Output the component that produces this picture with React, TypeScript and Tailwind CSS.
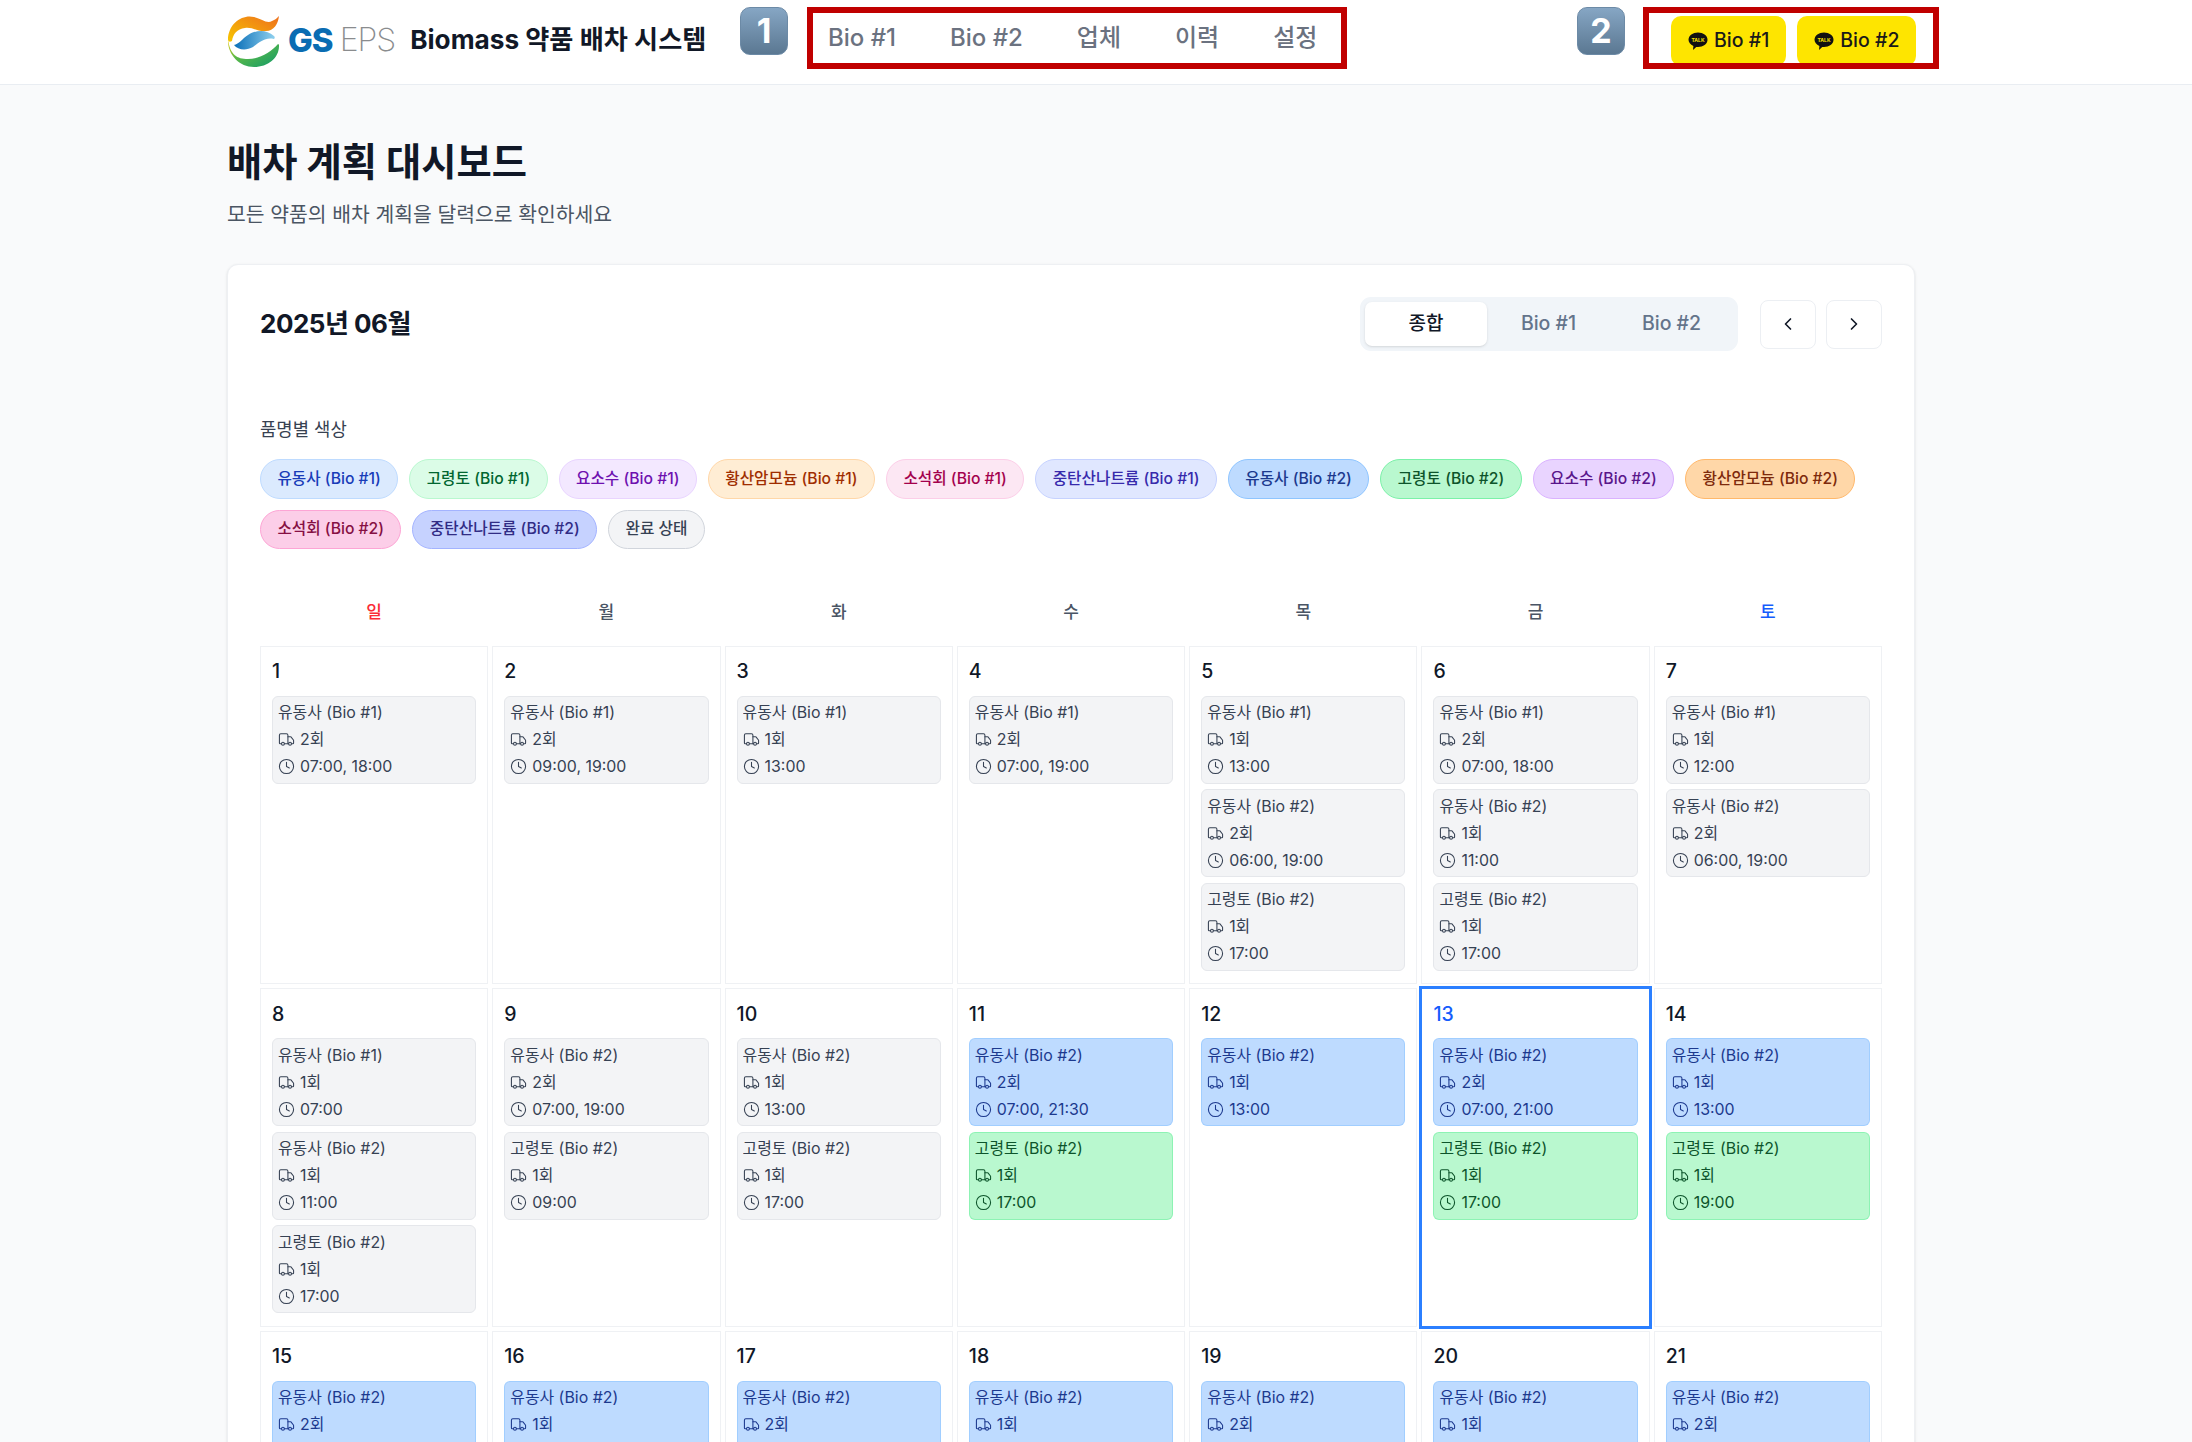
import { ChevronLeft, ChevronRight, Clock, Truck } from 'lucide-react';

type Tone = 'gray' | 'blue' | 'green';
type Batch = { name: string; count: number; times?: string; tone: Tone };

const tones: Record<Tone, string> = {
  gray: 'border-gray-200 bg-gray-100 text-gray-700',
  blue: 'border-blue-300/60 bg-blue-200 text-blue-900',
  green: 'border-green-300/70 bg-green-200 text-green-900',
};

const legend = [
  { label: '유동사 (Bio #1)', cls: 'border-blue-200 bg-blue-100 text-blue-800' },
  { label: '고령토 (Bio #1)', cls: 'border-green-200 bg-green-100 text-green-800' },
  { label: '요소수 (Bio #1)', cls: 'border-purple-200 bg-purple-100 text-purple-800' },
  { label: '황산암모늄 (Bio #1)', cls: 'border-orange-200 bg-orange-100 text-orange-800' },
  { label: '소석회 (Bio #1)', cls: 'border-pink-200 bg-pink-100 text-pink-800' },
  { label: '중탄산나트륨 (Bio #1)', cls: 'border-indigo-200 bg-indigo-100 text-indigo-800' },
  { label: '유동사 (Bio #2)', cls: 'border-blue-300 bg-blue-200 text-blue-900' },
  { label: '고령토 (Bio #2)', cls: 'border-green-300 bg-green-200 text-green-900' },
  { label: '요소수 (Bio #2)', cls: 'border-purple-300 bg-purple-200 text-purple-900' },
  { label: '황산암모늄 (Bio #2)', cls: 'border-orange-300 bg-orange-200 text-orange-900' },
  { label: '소석회 (Bio #2)', cls: 'border-pink-300 bg-pink-200 text-pink-900' },
  { label: '중탄산나트륨 (Bio #2)', cls: 'border-indigo-300 bg-indigo-200 text-indigo-900' },
  { label: '완료 상태', cls: 'border-gray-300 bg-gray-100 text-gray-700' },
];

const U1 = '유동사 (Bio #1)';
const U2 = '유동사 (Bio #2)';
const G2 = '고령토 (Bio #2)';

const b = (name: string, count: number, times: string | undefined, tone: Tone = 'gray'): Batch => ({ name, count, times, tone });

const days: Batch[][] = [
  [b(U1, 2, '07:00, 18:00')],
  [b(U1, 2, '09:00, 19:00')],
  [b(U1, 1, '13:00')],
  [b(U1, 2, '07:00, 19:00')],
  [b(U1, 1, '13:00'), b(U2, 2, '06:00, 19:00'), b(G2, 1, '17:00')],
  [b(U1, 2, '07:00, 18:00'), b(U2, 1, '11:00'), b(G2, 1, '17:00')],
  [b(U1, 1, '12:00'), b(U2, 2, '06:00, 19:00')],
  [b(U1, 1, '07:00'), b(U2, 1, '11:00'), b(G2, 1, '17:00')],
  [b(U2, 2, '07:00, 19:00'), b(G2, 1, '09:00')],
  [b(U2, 1, '13:00'), b(G2, 1, '17:00')],
  [b(U2, 2, '07:00, 21:30', 'blue'), b(G2, 1, '17:00', 'green')],
  [b(U2, 1, '13:00', 'blue')],
  [b(U2, 2, '07:00, 21:00', 'blue'), b(G2, 1, '17:00', 'green')],
  [b(U2, 1, '13:00', 'blue'), b(G2, 1, '19:00', 'green')],
  // the third week runs off the bottom of the page, times not visible
  [b(U2, 2, undefined, 'blue')],
  [b(U2, 1, undefined, 'blue')],
  [b(U2, 2, undefined, 'blue')],
  [b(U2, 1, undefined, 'blue')],
  [b(U2, 2, undefined, 'blue')],
  [b(U2, 1, undefined, 'blue')],
  [b(U2, 2, undefined, 'blue')],
];

const weekdays = ['일', '월', '화', '수', '목', '금', '토'];

function Logo() {
  return (
    <svg width="54" height="56" viewBox="0 0 54 56" className="shrink-0">
      <defs>
        <linearGradient id="top" x1="0" y1="1" x2="1" y2="0">
          <stop offset="0" stopColor="#f7c600" />
          <stop offset="1" stopColor="#ee6f1d" />
        </linearGradient>
        <linearGradient id="bottom" x1="0" y1="0" x2="1" y2="1">
          <stop offset="0" stopColor="#f0d21c" />
          <stop offset="0.4" stopColor="#5cb947" />
          <stop offset="1" stopColor="#0f9a6b" />
        </linearGradient>
        <linearGradient id="mid" x1="0" y1="0" x2="1" y2="0">
          <stop offset="0" stopColor="#0a6fb8" />
          <stop offset="1" stopColor="#8fd0ee" />
        </linearGradient>
      </defs>
      <path d="M1 28C1 11 16 2 27 5c8 2 13 7 18 4 3-1 5-3 7-5-1 8-5 15-13 15-8 1-13-4-21-3C10 17 6 22 5 29c-2 1-3 1-4-1Z" fill="url(#top)" />
      <path d="M1 27c2 16 9 20 20 20 12 0 23-7 30-15 1 0 1 1 1 2 0 12-11 21-25 21C12 55 0 42 1 27Z" fill="url(#bottom)" />
      <path d="M7 33c5-1 8-6 14-10 8-5 18-6 26 1 1 1 1 2 0 3-9-2-14 3-21 8-7 4-15 3-19-2Z" fill="url(#mid)" />
    </svg>
  );
}

function Keycap({ n }: { n: number }) {
  return (
    <span className="flex h-[48px] w-[48px] shrink-0 items-center justify-center rounded-[10px] border border-[#6c8aa6] bg-gradient-to-b from-[#86a6c4] to-[#5b7892] text-[34px] font-bold leading-none text-white">
      {n}
    </span>
  );
}

function KakaoButton({ label }: { label: string }) {
  return (
    <button type="button" className="flex h-[50px] items-center gap-[6px] rounded-[10px] bg-[#fee500] px-[17px] text-[19.5px] font-medium leading-none text-[#191919]">
      <svg width="20" height="20" viewBox="0 0 20 20">
        <path d="M10 1.5c5 0 9.500 3 9.500 7.300S15 16 10 16c-.6 0-1.200 0-1.800-.1L5 19l.4-4.100C2.400 13.600.5 11.400.5 8.800.5 4.500 5 1.500 10 1.500Z" fill="#111" />
        <text x="10" y="10.800" textAnchor="middle" fontSize="5" fontWeight="700" fill="#fee500">TALK</text>
      </svg>
      {label}
    </button>
  );
}

function BatchCard({ item }: { item: Batch }) {
  return (
    <div className={`h-[88px] rounded-[6px] border px-[5px] pt-[2.5px] text-[15.9px] leading-[27px] ${tones[item.tone]}`}>
      <p className="truncate">{item.name}</p>
      <p className="flex items-center gap-[5px]">
        <Truck className="h-[17px] w-[17px]" strokeWidth={1.5} />
        {item.count}회
      </p>
      {item.times && (
        <p className="flex items-center gap-[5px]">
          <Clock className="h-[17px] w-[17px]" strokeWidth={1.5} />
          {item.times}
        </p>
      )}
    </div>
  );
}

export default function App() {
  return (
    <div className="h-[1442px] overflow-hidden bg-[#f9fafb] font-['Inter','Noto_Sans_CJK_KR',sans-serif] text-gray-900">
      <header className="h-[85px] border-b border-[#e9edf2] bg-white">
        <div className="flex h-[84px] items-start pl-[227px] pr-[253px]">
          <div className="mt-[12px] flex items-center">
            <Logo />
            <span className="ml-[7px] text-[33px] font-extrabold leading-none tracking-[-1px] text-[#0a6cb2]">GS</span>
            <span className="ml-[7px] text-[32px] font-extralight leading-none tracking-[-1px] text-[#8a8c8e]">EPS</span>
          </div>
          <h2 className="ml-[15px] mt-[25px] text-[26.2px] font-bold leading-[30px] text-[#111827]">Biomass 약품 배차 시스템</h2>
          <div className="ml-auto mt-[7px]">
            <Keycap n={1} />
          </div>
          <nav className="ml-[19px] mt-[7px] flex h-[62px] w-[540px] items-center gap-[54px] border-[6px] border-[#c00000] pl-[15px] text-[24px] font-medium text-[#6b7280]">
            <span>Bio #1</span>
            <span>Bio #2</span>
            <span>업체</span>
            <span>이력</span>
            <span>설정</span>
          </nav>
          <div className="ml-[230px] mt-[7px]">
            <Keycap n={2} />
          </div>
          <div className="ml-[18px] mt-[7px] flex h-[62px] w-[296px] items-start gap-[11px] overflow-hidden border-[6px] border-[#c00000] pl-[22px] pt-[3px]">
            <KakaoButton label="Bio #1" />
            <KakaoButton label="Bio #2" />
          </div>
        </div>
      </header>

      <main className="pl-[227px] pr-[277px] pt-[54px]">
        <h1 className="text-[38.3px] font-bold leading-[46px] text-[#111827]">배차 계획 대시보드</h1>
        <p className="mt-[14px] text-[20.4px] leading-[32px] text-[#4b5563]">모든 약품의 배차 계획을 달력으로 확인하세요</p>

        <section className="mt-[33px] rounded-[11px] border border-[#eef0f3] bg-white px-[32px] pt-[32px] shadow-sm">
          <div className="flex items-center">
            <h2 className="text-[26px] font-bold leading-[40px] tracking-[-0.5px] text-[#111827]">2025년 06월</h2>
            <div className="ml-auto flex h-[54px] w-[378px] gap-0 rounded-[11px] bg-[#f1f5f9] p-[5px]">
              <button type="button" className="w-[122px] rounded-[7px] bg-white text-[19px] font-medium text-[#111827] shadow-sm">종합</button>
              <button type="button" className="w-[123px] text-[19.5px] font-medium text-[#64748b]">Bio #1</button>
              <button type="button" className="w-[123px] text-[19.5px] font-medium text-[#64748b]">Bio #2</button>
            </div>
            <div className="ml-[22px] flex gap-[10px]">
              <button type="button" className="flex h-[49px] w-[56px] items-center justify-center rounded-[8px] border border-[#eceff3] bg-white">
                <ChevronLeft className="h-[20px] w-[20px] text-[#111827]" />
              </button>
              <button type="button" className="flex h-[49px] w-[56px] items-center justify-center rounded-[8px] border border-[#eceff3] bg-white">
                <ChevronRight className="h-[20px] w-[20px] text-[#111827]" />
              </button>
            </div>
          </div>

          <p className="mt-[65px] text-[17.8px] leading-[28px] text-[#374151]">품명별 색상</p>
          <div className="mt-[15px] flex flex-wrap gap-x-[11px] gap-y-[11px]">
            {legend.map((l) => (
              <span key={l.label} className={`flex h-[39.5px] items-center rounded-full border px-[16.4px] text-[15.7px] font-medium ${l.cls}`}>
                {l.label}
              </span>
            ))}
          </div>

          <div className="mt-[43px] grid grid-cols-7 gap-[4px]">
            {weekdays.map((d, i) => (
              <div
                key={d}
                className={`h-[49.5px] text-center text-[17px] font-medium leading-[40px] ${i === 0 ? 'text-red-500' : i === 6 ? 'text-blue-600' : 'text-gray-600'}`}
              >
                {d}
              </div>
            ))}
            {days.map((items, i) => {
              const today = i === 12;
              return (
                <div
                  key={i}
                  className={`relative flex h-[338.5px] flex-col border bg-white px-[11px] pt-[49px] ${today ? 'border-blue-500 ring-2 ring-blue-500' : 'border-[#eff1f4]'}`}
                >
                  <span className={`absolute left-[11px] top-[11.5px] text-[19.5px] font-medium leading-[26px] ${today ? 'text-blue-600' : 'text-gray-900'}`}>{i + 1}</span>
                  <div className="flex flex-col gap-[5.7px]">
                    {items.map((item, j) => (
                      <BatchCard key={j} item={item} />
                    ))}
                  </div>
                </div>
              );
            })}
          </div>
        </section>
      </main>
    </div>
  );
}
